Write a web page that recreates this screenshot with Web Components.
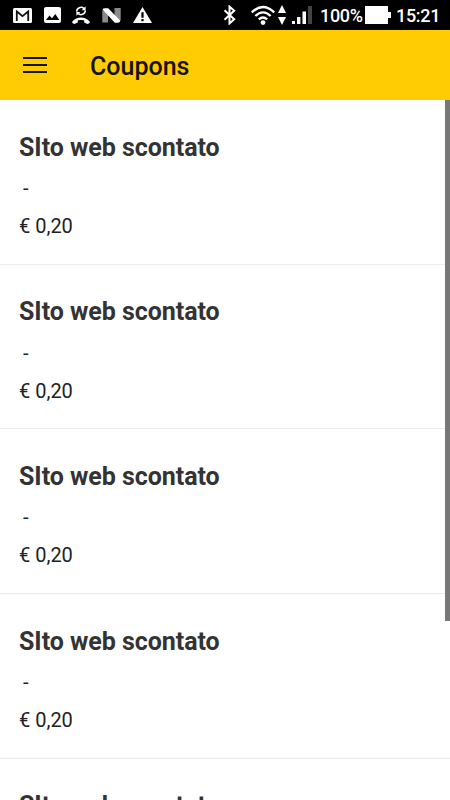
<!DOCTYPE html>
<html lang="it">
<head>
<meta charset="utf-8">
<title>Coupons</title>
<style>
html,body{margin:0;height:100%;overflow:hidden;background:#fff;font-family:Roboto,"Liberation Sans",sans-serif}
</style>
</head>
<body>
<coupon-app></coupon-app>
<script>
const define = (name, html, setup) => {
  const template = document.createElement('template');
  template.innerHTML = html;
  customElements.define(name, class extends HTMLElement {
    constructor() {
      super();
      this.attachShadow({ mode: 'open' }).append(template.content.cloneNode(true));
    }
    connectedCallback() { if (setup) setup(this); }
  });
};

const icons = {
  mail: [19, 15, '<rect width="19" height="15" rx="1.5" fill="#fff"/><path d="M3.8 13V3.5L9.5 8.2 15.2 3.5V13" fill="none" stroke="#111" stroke-width="1.8"/>'],
  image: [17, 16, '<rect width="17" height="16" rx="2" fill="#fff"/><path d="M2 13L5.5 8.5 8 11.2 11.3 7 15.3 13Z" fill="#000"/>'],
  call: [18, 19, '<path d="M4.6 5.6A4.4 4.4 0 0 1 12 2.6M13.4 4.4A4.4 4.4 0 0 1 6 7.4" fill="none" stroke="#fff" stroke-width="1.5"/><path d="M13.6.3V4.2H9.7ZM4.4 9.8V6H8.3Z" fill="#fff"/><path d="M.3 15.6Q4 11.6 9 11.6T17.7 15.6V17L15.6 18 12.2 16.4V14.3Q9 13.5 5.8 14.3V16.4L2.4 18 .3 17Z" fill="#fff"/>'],
  nougat: [19, 15, '<path d="M.3 2L6 4V14.6H.3ZM12.5 0H18.7V12.6L12.5 10Z" fill="#8b8b8b"/><path d="M.6 1.4Q1 .2 3 .2H6.2L18.4 12.8Q17.6 14.7 16 14.7H12.8Z" fill="#fff"/>'],
  warning: [19, 16, '<path d="M9.5 0L19 16H0Z" fill="#fff"/><path d="M8.4 5.3H10.6V10.8H8.4ZM8.4 12H10.6V14.2H8.4Z" fill="#000"/>'],
  bluetooth: [13, 20, '<path d="M1.5 5.2L11.2 14.2 6.5 18.4V1.6L11.2 5.8 1.5 14.8" fill="none" stroke="#fff" stroke-width="2"/>'],
  wifi: [24, 20, '<g fill="none" stroke="#fff" stroke-width="2.3"><path d="M.8 7.3Q12-3.2 23.2 7.3"/><path d="M4.4 11Q12 3.8 19.6 11"/><path d="M7.8 14.4Q12 10.5 16.2 14.4"/></g><circle cx="12" cy="17.6" r="2.4" fill="#fff"/>'],
  traffic: [10, 20, '<path d="M5 0L9 8H1ZM5 20L1 12H9Z" fill="#fff"/>'],
  signal: [20, 18, '<path d="M0 15H3V18H0ZM5 11H8.4V18H5ZM10.5 5.5H14V18H10.5Z" fill="#fff"/><path d="M16 0H20V18H16Z" fill="#444"/>'],
  battery: [26, 18, '<path d="M0 0H23V6H26V12H23V18H0Z" fill="#fff"/>'],
  menu: [24, 16, '<path d="M0 1H24M0 8H24M0 15H24" stroke="#181300" stroke-width="2.2"/>']
};

define('ui-icon', '<style>:host{display:block;flex:none}svg{display:block}</style><svg xmlns="http://www.w3.org/2000/svg"></svg>', el => {
  const [w, h, art] = icons[el.getAttribute('name')];
  const svg = el.shadowRoot.querySelector('svg');
  svg.setAttribute('width', w);
  svg.setAttribute('height', h);
  svg.setAttribute('viewBox', `0 0 ${w} ${h}`);
  svg.innerHTML = art;
});

define('status-bar', `<style>
:host{display:flex;justify-content:space-between;height:30px;box-sizing:border-box;padding:0 11px 0 13px;background:#000;color:#fff;font-size:18px;font-weight:500;line-height:30px}
div{display:flex;align-items:center}
.left{gap:11.7px}
span{padding-top:1px;height:29px;line-height:30px}
.level{margin-left:8px;width:43px;letter-spacing:-.3px}
.time{margin-left:5px;width:43px;white-space:nowrap;letter-spacing:-.3px}
</style>
<div class="left"><ui-icon name="mail"></ui-icon><ui-icon name="image"></ui-icon><ui-icon name="call"></ui-icon><ui-icon name="nougat"></ui-icon><ui-icon name="warning"></ui-icon></div>
<div><ui-icon name="bluetooth"></ui-icon><ui-icon name="wifi" style="margin-left:15px"></ui-icon><ui-icon name="traffic" style="margin-left:2px"></ui-icon><ui-icon name="signal" style="margin-left:5px"></ui-icon><span class="level">100%</span><ui-icon name="battery" style="margin-left:2px"></ui-icon><span class="time">15:21</span></div>`);

define('app-header', `<style>
:host{display:flex;align-items:center;gap:43px;height:70px;box-sizing:border-box;padding:0 23px;background:#ffcb02;color:#181300}
h1{margin:4px 0 0;font-size:25px;line-height:30px;font-weight:500}
</style><ui-icon name="menu"></ui-icon><h1><slot></slot></h1>`);

define('coupon-item', `<style>
:host{display:flex;flex-direction:column;flex:none;height:164.7px;box-sizing:border-box;padding:31.7px 19px 0;border-bottom:1px solid #ebebeb;color:#222}
h2{margin:0;font-size:25px;line-height:32px;font-weight:700;color:#333;letter-spacing:-.04px}
.note{margin-top:11.3px;padding-left:4px;font-size:20px;line-height:26px}
.price{margin-top:12px;font-size:20px;line-height:26px}
</style><h2><slot></slot></h2><div class="note"><slot name="note"></slot></div><div class="price"><slot name="price"></slot></div>`);

define('scroll-thumb', '<style>:host{display:block;position:absolute;top:0;right:0;width:5px;height:521px;background:#777}</style>');

define('coupon-list', '<style>:host{display:flex;flex-direction:column;position:relative;flex:1;min-height:0;overflow:hidden;background:#fff}</style><slot></slot><scroll-thumb></scroll-thumb>');

const row = '<coupon-item>SIto web scontato<span slot="note">-</span><span slot="price">€ 0,20</span></coupon-item>';
define('coupon-app', `<style>:host{display:flex;flex-direction:column;height:100vh;overflow:hidden}</style>
<status-bar></status-bar><app-header>Coupons</app-header><coupon-list>${row.repeat(5)}</coupon-list>`);
</script>
</body>
</html>
